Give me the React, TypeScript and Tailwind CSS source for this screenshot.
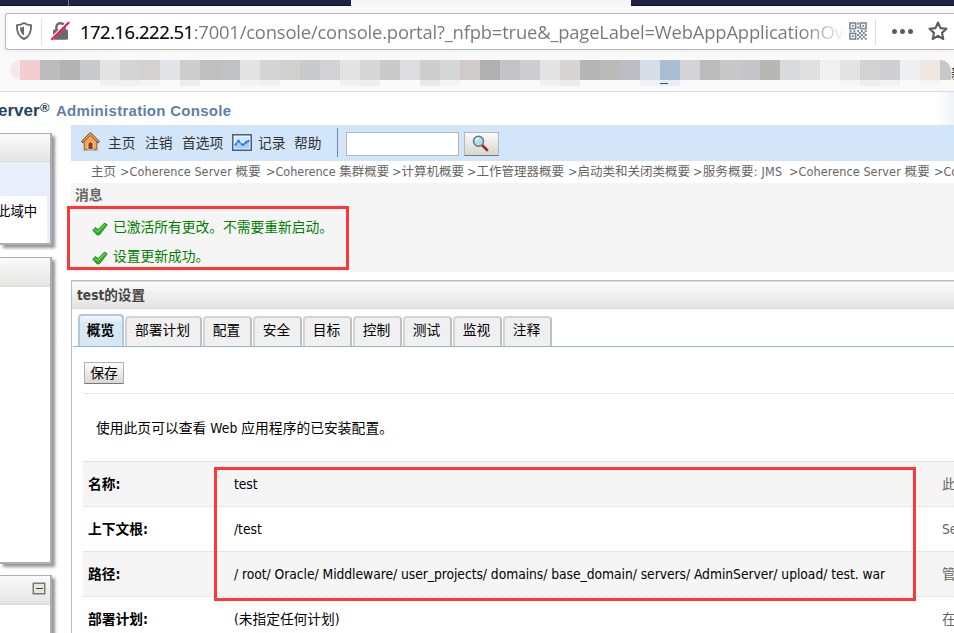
import React from 'react';

const MOSAIC = [
  '#f5cccf', '#bcbcbc', '#b3b3b3', '#c9cacd', '#e3e3e3', '#d4d4d4', '#d4d2cf', '#e2e4ea', '#cdcdcd', '#bfbfbf',
  '#c0c1c4', '#e3e3e3', '#d4d4d4', '#d2d0cd', '#c9cacc', '#d2d2d4', '#e3e3e3', '#d7d7d7', '#cacaca', '#dddde0',
  '#cdcdcd', '#d7d7d7', '#d0cac8', '#b0b0b1', '#c2c3c6', '#cdcdcf', '#e3e3e3', '#d7d5d2', '#b5b5b8', '#bababa',
  '#bcbdc2', '#d6dce8', '#a9bdd3', '#d4d4d6', '#bcbcbc', '#c8c8c8', '#c4c6c8', '#b9b7b4', '#d9dadc', '#e0e0e0',
  '#f1f1f1', '#e3e3e3', '#d2d2d2', '#cfcfd1', '#edf0f2', '#efe8e1',
];

const SHADES: Record<number, string> = {
  4: '#f1f1f1', 5: '#efefef', 6: '#f4f4f4', 8: '#ededed', 11: '#f3f3f3', 12: '#f1f1f1', 16: '#f1f1f1', 17: '#eeeeee',
  20: '#e9e9e9', 21: '#f4f4f4', 26: '#f1f1f1', 27: '#ececec', 31: '#f0f2f6', 32: '#e9eef4', 41: '#f5f5f5', 42: '#eeeeee', 43: '#f3f3f3', 45: '#f1f6f8',
};

function ShieldIcon() {
  return (
    <svg className="block" width="18" height="20" viewBox="0 0 18 20">
      <path d="M9 2 C6.5 3.6 4 4.1 1.9 4.1 C1.7 10.8 3.2 15.6 9 18 C14.8 15.6 16.3 10.8 16.1 4.1 C14 4.1 11.5 3.6 9 2Z" fill="none" stroke="#6a6a6c" strokeWidth="1.9" strokeLinejoin="round" />
      <path d="M9 5.4 V14.6 C6.1 12.7 5.1 10.6 5 6.5 C6.5 6.3 7.8 6 9 5.4Z" fill="#6a6a6c" />
    </svg>
  );
}

function LockIcon() {
  return (
    <svg className="block" width="19" height="20" viewBox="0 0 19 20">
      <path d="M5.4 9 V6.2 C5.4 0.9 13.6 0.9 13.6 6.2 V9" fill="none" stroke="#6a6a6c" strokeWidth="2.4" />
      <rect x="2" y="8.4" width="15" height="10.3" rx="1.4" fill="#6a6a6c" />
      <path d="M0.8 17.6 L17 1.3" stroke="#fff" strokeWidth="3" />
      <path d="M1 18.2 L17.6 1.7" stroke="#ff0f42" strokeWidth="2" strokeLinecap="round" />
    </svg>
  );
}

function QrIcon() {
  const dots = [[11, 11], [15, 11], [13, 13], [17, 13], [11, 15], [15, 15], [13, 17], [17, 17], [9, 9], [9, 13], [9, 1], [9, 5], [1, 9], [5, 9], [13, 9], [17, 9], [9, 17]];
  return (
    <svg className="block" width="18" height="18" viewBox="0 0 19 19">
      {[[1, 1], [12, 1], [1, 12]].map(([x, y]) => (
        <g key={`${x}-${y}`}>
          <rect x={x} y={y} width="6" height="6" fill="none" stroke="#7b8894" strokeWidth="1.7" />
          <rect x={x + 2} y={y + 2} width="2" height="2" fill="#7b8894" />
        </g>
      ))}
      {dots.map(([x, y]) => <rect key={`${x}.${y}`} x={x - 0.4} y={y - 0.4} width="2.1" height="2.1" fill="#7b8894" />)}
    </svg>
  );
}

function HomeIcon() {
  return (
    <svg className="block" width="19" height="19" viewBox="0 0 19 19">
      <path d="M3.2 9 L9.5 3 L15.8 9 V17.3 H3.2Z" fill="#f7a552" stroke="#8a6038" />
      <path d="M1 10.3 L9.3 1.6 L18 10.3" fill="none" stroke="#4f3f33" strokeWidth="2.6" strokeLinejoin="round" />
      <path d="M1.6 9.7 L9.3 1.9 L17.4 9.7" fill="none" stroke="#f39c4a" strokeWidth="1.5" />
      <path d="M7 17.5 V11 Q9.5 8.5 12 11 V17.5Z" fill="#853d27" stroke="#ffe0ab" strokeWidth="0.8" />
      <path d="M2 18.2 H17" stroke="#a39d96" strokeWidth="1" />
    </svg>
  );
}

function ChartIcon() {
  return (
    <svg className="block" width="20" height="17" viewBox="0 0 20 17">
      <rect x="0.8" y="0.8" width="18.4" height="15.4" fill="#fff" stroke="#435b7e" strokeWidth="1.5" />
      <rect x="2.5" y="2.5" width="15" height="12" fill="#d5e7fb" />
      <path d="M2.5 11 L6.5 6.5 L10 10 L12 11 L14 8 L17.5 6.5 V14.5 H2.5Z" fill="#a8cdf5" />
      <path d="M3.3 10.5 L6.5 7 L9.5 10.3 L12 10.5 L14 8 L16.5 7" fill="none" stroke="#2e8ae6" strokeWidth="1.2" />
      <g fill="#1a70d4"><circle cx="3.6" cy="10.5" r="1.1" /><circle cx="6.5" cy="7" r="1.3" /><circle cx="11" cy="10.5" r="1.3" /><circle cx="14" cy="8.5" r="1.2" /><circle cx="16.4" cy="6.8" r="1.1" /></g>
    </svg>
  );
}

function SearchIcon() {
  return (
    <svg className="block" width="17" height="17" viewBox="0 0 17 17">
      <path d="M10 10 L15 15" stroke="#a9262a" strokeWidth="2.8" strokeLinecap="round" />
      <circle cx="6.5" cy="6.3" r="5" fill="#a9e1f1" stroke="#657683" strokeWidth="1.5" />
      <path d="M3.7 6 Q4.4 3.5 7 3.4" stroke="#f2fdff" strokeWidth="1.7" fill="none" />
    </svg>
  );
}

function CheckIcon() {
  return (
    <svg className="block" width="16" height="14" viewBox="0 0 16 14">
      <path d="M0.8 8.2 L3.2 5.6 L6.2 7.6 L12.6 1 L15.2 2.8 L7.6 12.7 L5.2 13Z" fill="#27b41c" stroke="#2a7d2a" strokeWidth="0.9" strokeLinejoin="round" />
      <path d="M2.4 7.4 L6 9.6 L13 2.4" fill="none" stroke="#6fd65c" strokeWidth="1.1" />
    </svg>
  );
}

function BrowserChrome() {
  return (
    <header className="h-[92px] shrink-0 border-b border-[#dedee0] bg-[#f9f9fa]">
      <div className="flex h-[6px]">
        <div className="w-[68px] border-b border-[#15102c] bg-[#1f2341]" />
        <div className="w-px bg-[#777a8d]" />
        <div className="w-[282px] border-b border-[#15102c] bg-[#1f2341]" />
        <div className="w-[280px] bg-[#f5f6f7]" />
        <div className="flex-1 border-b border-[#15102c] bg-[#1f2341]" />
      </div>
      <div className="ml-[5px] mt-[7px] flex h-[37px] items-center rounded-l-[3px] border border-r-0 border-[#bababb] bg-white shadow-[0_1px_4px_rgba(0,0,0,0.06)]">
        <div className="ml-[9px] mt-[-1px]"><ShieldIcon /></div>
        <div className="ml-[8px] h-[26px] w-px bg-[#dededf]" />
        <div className="ml-[9px] mt-[-1px]"><LockIcon /></div>
        <div className="ml-[10px] w-[766px] shrink-0 whitespace-nowrap bg-linear-to-r from-[#777] from-94% to-white to-100% bg-clip-text font-['Open_Sans','Noto_Sans',sans-serif] text-[18.4px] leading-[34px] tracking-[-0.18px] text-transparent">
          <span className="tracking-[-0.46px] text-[#0c0c0d]">172.16.222.51</span>:7001/console/console.portal?_nfpb=true&amp;_pageLabel=WebAppApplicationOv
        </div>
        <div className="ml-[3px] mt-[-1px]"><QrIcon /></div>
        <div className="ml-[8px] h-[26px] w-px bg-[#dededf]" />
        <div className="ml-[16px] flex gap-[3px]">
          <i className="size-[5px] rounded-full bg-[#5c5c5e]" /><i className="size-[5px] rounded-full bg-[#5c5c5e]" /><i className="size-[5px] rounded-full bg-[#5c5c5e]" />
        </div>
        <svg className="ml-[14px] mt-[-1px] block shrink-0" width="22" height="22" viewBox="0 0 22 22">
          <path d="M11 2.5 L13.5 8.1 L19.5 8.8 L15 12.9 L16.3 19 L11 15.9 L5.7 19 L7 12.9 L2.5 8.8 L8.5 8.1Z" fill="none" stroke="#5c5c5e" strokeWidth="2.1" strokeLinejoin="round" />
        </svg>
      </div>
      <div className="mt-[10px] flex h-[27px] items-start overflow-hidden">
        <div className="ml-[10px] h-5 w-[10px] shrink-0 rounded-l-full bg-[#f9e6e8]" />
        {MOSAIC.map((c, i) => (
          <div key={i} className="w-5 shrink-0">
            <div className="h-5" style={{ backgroundColor: c }} />
            <div className="h-[6px]" style={{ backgroundColor: SHADES[i] ?? '#fafafa' }}>
              {i === 32 && <div className="relative top-[3px] h-px w-2 bg-[#2c5690]" />}
            </div>
          </div>
        ))}
        <div className="h-5 w-[11px] shrink-0 rounded-tr-full bg-[#c8c8ca]" />
        <div className="w-[3px] pt-[5px] font-['Noto_Sans_CJK_SC',sans-serif] text-[13px] leading-[16px] text-[#111]">新</div>
      </div>
    </header>
  );
}

function Sidebar() {
  const header = 'border-b border-[#d9dbda] bg-linear-to-b from-[#fafafa] to-[#e4e5e3]';
  const box = 'border-y border-r-2 border-[#a9b0b4] bg-white shadow-[3px_3px_3px_rgba(90,90,90,0.65)]';
  return (
    <aside className="w-[52px] shrink-0 pt-[8px]">
      <div className={`h-[112px] border-b-2 ${box}`}>
        <div className={`h-[28px] ${header}`} />
        <div className="h-[34px] bg-[#e8eefb]" />
        <div className="h-[47px] border-r-[3px] border-[#e8eefb] pt-[6px]">
          <p className="-ml-[3px] whitespace-nowrap text-[13.4px] leading-[20px] text-black">此域中</p>
        </div>
      </div>
      <div className={`mt-[12px] h-[307px] border-b-2 ${box}`}>
        <div className={`h-[29px] ${header}`} />
      </div>
      <div className={`mt-[11px] h-[70px] ${box}`}>
        <div className={`flex h-[29px] items-start justify-end pr-[5px] pt-[7px] ${header}`}>
          <div className="flex h-[11px] w-[12px] items-center justify-center border border-[#777a71] bg-[#e5e7dc] shadow-[0_0_0_0.5px_#777a71]"><i className="h-px w-[7px] bg-[#444]" /></div>
        </div>
      </div>
    </aside>
  );
}

function NavBar() {
  return (
    <nav className="flex h-[36px] shrink-0 items-center bg-[#d2e5f9] text-[13.75px] leading-[20px] text-[#333]">
      <div className="w-[37px] pl-[10px] -mt-[3px]"><HomeIcon /></div>
      <span className="w-[37px]">主页</span>
      <span className="w-[37px]">注销</span>
      <span className="w-[50px]">首选项</span>
      <div className="w-[26px] -mt-[2px]"><ChartIcon /></div>
      <span className="w-[36px]">记录</span>
      <span className="w-[43px]">帮助</span>
      <div className="h-[29px] w-px bg-[#7788a5] -mt-[1px]" />
      <div className="ml-[8px] h-[24px] w-[113px] border border-[#b3b6b5] bg-white mt-[2px]" />
      <div className="ml-[5px] mt-[2px] flex h-[24px] w-[35px] items-center justify-center border border-[#b7b7b7] border-b-[#777] bg-linear-to-b from-[#fafafa] to-[#d6d7d0] pr-[2px] pb-[2px]"><SearchIcon /></div>
    </nav>
  );
}

const CRUMBS = [
  { text: '主页', cls: 'w-[29px]' },
  { text: '>Coherence Server 概要', cls: 'w-[146px] tracking-[0.1px]' },
  { text: '>Coherence 集群概要', cls: 'w-[126px]' },
  { text: '>计算机概要', cls: 'w-[75px]' },
  { text: '>工作管理器概要', cls: 'w-[101px]' },
  { text: '>启动类和关闭类概要', cls: 'w-[125px]' },
  { text: '>服务概要: JMS', cls: 'w-[96px] tracking-[0.25px]' },
  { text: '>Coherence Server 概要', cls: 'w-[145px] tracking-[0.1px]' },
  { text: '>Coherence', cls: 'w-[90px]' },
];

const TABS = [
  { text: '部署计划', cls: 'w-[77px]' }, { text: '配置', cls: 'w-[49px]' }, { text: '安全', cls: 'w-[49px]' }, { text: '目标', cls: 'w-[49px]' },
  { text: '控制', cls: 'w-[49px]' }, { text: '测试', cls: 'w-[49px]' }, { text: '监视', cls: 'w-[49px]' }, { text: '注释', cls: 'w-[49px]' },
];

const ROWS = [
  { label: '名称:', value: 'test', help: '此' },
  { label: '上下文根:', value: '/test', help: 'Se' },
  { label: '路径:', value: '/ root/ Oracle/ Middleware/ user_projects/ domains/ base_domain/ servers/ AdminServer/ upload/ test. war', help: '管' },
  { label: '部署计划:', value: '(未指定任何计划)', help: '在' },
];

function Messages() {
  return (
    <section className="h-[89px] shrink-0 bg-[#f5f5f5] text-[13.75px]">
      <h2 className="pl-[4px] pt-[2px] font-bold leading-[20px] text-[#666]">消息</h2>
      <div className="mt-[12px] flex items-center pl-[21px] leading-[20px] text-[#008000]"><div className="pt-[3px]"><CheckIcon /></div><span className="ml-[5px]">已激活所有更改。不需要重新启动。</span></div>
      <div className="mt-[9px] flex items-center pl-[21px] leading-[20px] text-[#008000]"><div className="pt-[3px]"><CheckIcon /></div><span className="ml-[5px]">设置更新成功。</span></div>
    </section>
  );
}

function SettingsPanel() {
  return (
    <section className="mt-[8px] shrink-0 border-l border-t border-[#b7bec1] text-[13.75px] text-black">
      <h1 className="h-[28px] border-b border-[#d8dad9] border-t border-t-[#d9dddd] bg-linear-to-b from-[#fbfbfb] to-[#e2e4e1] pl-[5px] text-[13.6px] font-bold leading-[26px] text-[#444]">test的设置</h1>
      <div className="ml-[1px] flex h-[38px] items-end border-b border-[#94b6d6] pl-[5px]">
        <div className="h-[32px] w-[46px] rounded-t-[4px] border-2 border-b-0 border-[#b0c8e2] bg-linear-to-b from-[#f5f9fd] to-[#d7e7f4] to-25% pr-[1px] text-center font-bold leading-[28px]">概览</div>
        <div className="ml-[1px] flex gap-[1px]">
          {TABS.map((t) => (
            <div key={t.text} className={`${t.cls} h-[30px] rounded-t-[4px] border-2 border-b-0 border-[#d3d3d3] border-r-[#c0c0c0] bg-[#f0f0f0] pr-[2px] text-center leading-[25px]`}>{t.text}</div>
          ))}
        </div>
      </div>
      <div className="ml-[12px] h-[47px] border-b border-dotted border-[#d5d5d5] pt-[15px]">
        <button className="block h-[22px] w-[40px] border border-[#b0b0b0] border-b-[#777] bg-linear-to-b from-[#fdfdfd] to-[#d7d8d2] leading-[20px]">保存</button>
      </div>
      <p className="h-[67px] pl-[24px] pt-[24px] leading-[20px] tracking-[0.04px]">使用此页可以查看 Web 应用程序的已安装配置。</p>
      <dl className="pl-[11px]">
        {ROWS.map((r) => (
          <div key={r.label} className="flex h-[45px] whitespace-nowrap border-t border-dotted border-[#d4d4d4] pt-[12px] leading-[20px] odd:bg-[#f5f5f5]">
            <dt className="w-[151px] shrink-0 pl-[5px] font-bold">{r.label}</dt>
            <dd className="w-[708px] shrink-0 tracking-[-0.05px]">{r.value}</dd>
            <dd className="text-[#666]">{r.help}</dd>
          </div>
        ))}
      </dl>
    </section>
  );
}

export default function App() {
  return (
    <div className="relative flex h-[633px] w-[954px] flex-col overflow-hidden bg-white font-['DejaVu_Sans_Condensed','Noto_Sans_CJK_SC',sans-serif]">
      <BrowserChrome />
      <div className="flex h-[33px] shrink-0 items-start justify-between whitespace-nowrap font-['Liberation_Sans',sans-serif] font-bold">
        <div className="flex pt-[8px] leading-[22px]">
          <span className="-ml-[2px] w-[42px] text-[17px] text-[#24425f]">erver</span>
          <span className="-mt-[3px] w-[16px] text-[13px] text-[#24425f]">®</span>
          <span className="text-[15px] tracking-[0.28px] text-[#5f80a5]">Administration Console</span>
        </div>
        <div className="h-full w-[20px] bg-linear-to-r from-white to-[#f0f4fa]" />
      </div>
      <div className="flex min-h-0 flex-1">
        <Sidebar />
        <main className="ml-[19px] flex min-w-0 flex-1 flex-col">
          <NavBar />
          <div className="flex h-[22px] shrink-0 overflow-hidden whitespace-nowrap pl-[20px] text-[12.5px] leading-[21px] text-[#666]">
            {CRUMBS.map((c, i) => <span key={i} className={`${c.cls} shrink-0`}>{c.text}</span>)}
          </div>
          <Messages />
          <SettingsPanel />
        </main>
      </div>
      <div className="pointer-events-none absolute left-[67px] top-[206px] h-[64px] w-[282px] border-[3px] border-[#fe3737]" />
      <div className="pointer-events-none absolute left-[214px] top-[467px] h-[134px] w-[702px] border-[3px] border-[#fe3737]" />
    </div>
  );
}
